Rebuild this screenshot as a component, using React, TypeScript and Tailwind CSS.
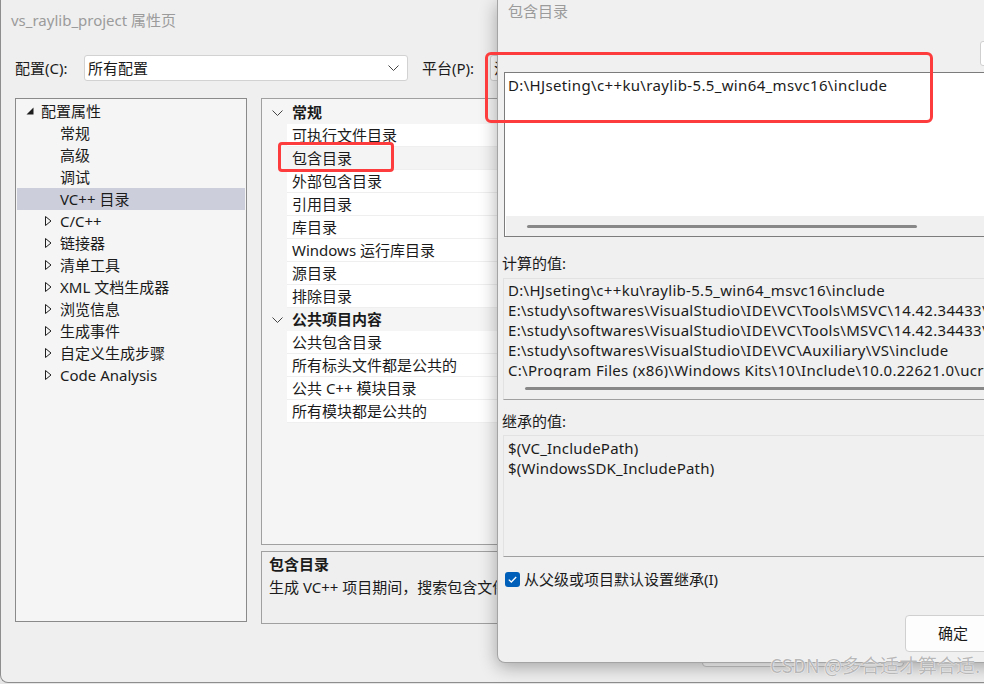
import React from "react";

const Chevron = ({ className = "" }: { className?: string }) => (
  <svg width="11" height="6" viewBox="0 0 11 6" className={className}>
    <path d="M0.5 0.5 L5.5 5.5 L10.5 0.5" fill="none" stroke="#444" strokeWidth="1" />
  </svg>
);

const Expanded = () => (
  <svg width="8" height="8" viewBox="0 0 8 8">
    <polygon points="7.5,0.5 7.5,7.5 0.5,7.5" fill="#1e1e1e" />
  </svg>
);

const Collapsed = () => (
  <svg width="7" height="10" viewBox="0 0 7 10">
    <polygon points="0.5,0.5 6,5 0.5,9.5" fill="none" stroke="#1e1e1e" strokeWidth="1" />
  </svg>
);

type TreeItem = { label: string; level: 0 | 1; kind: "open" | "closed" | "leaf"; selected?: boolean };

const tree: TreeItem[] = [
  { label: "配置属性", level: 0, kind: "open" },
  { label: "常规", level: 1, kind: "leaf" },
  { label: "高级", level: 1, kind: "leaf" },
  { label: "调试", level: 1, kind: "leaf" },
  { label: "VC++ 目录", level: 1, kind: "leaf", selected: true },
  { label: "C/C++", level: 1, kind: "closed" },
  { label: "链接器", level: 1, kind: "closed" },
  { label: "清单工具", level: 1, kind: "closed" },
  { label: "XML 文档生成器", level: 1, kind: "closed" },
  { label: "浏览信息", level: 1, kind: "closed" },
  { label: "生成事件", level: 1, kind: "closed" },
  { label: "自定义生成步骤", level: 1, kind: "closed" },
  { label: "Code Analysis", level: 1, kind: "closed" },
];

type GridRow = { label: string; header?: boolean; selected?: boolean };
const grid: GridRow[] = [
  { label: "常规", header: true },
  { label: "可执行文件目录" },
  { label: "包含目录", selected: true },
  { label: "外部包含目录" },
  { label: "引用目录" },
  { label: "库目录" },
  { label: "Windows 运行库目录" },
  { label: "源目录" },
  { label: "排除目录" },
  { label: "公共项目内容", header: true },
  { label: "公共包含目录" },
  { label: "所有标头文件都是公共的" },
  { label: "公共 C++ 模块目录" },
  { label: "所有模块都是公共的" },
];

const computed = [
  "D:\\HJseting\\c++ku\\raylib-5.5_win64_msvc16\\include",
  "E:\\study\\softwares\\VisualStudio\\IDE\\VC\\Tools\\MSVC\\14.42.34433\\include",
  "E:\\study\\softwares\\VisualStudio\\IDE\\VC\\Tools\\MSVC\\14.42.34433\\ATLMFC\\include",
  "E:\\study\\softwares\\VisualStudio\\IDE\\VC\\Auxiliary\\VS\\include",
  "C:\\Program Files (x86)\\Windows Kits\\10\\Include\\10.0.22621.0\\ucrt",
];

function MainWindow() {
  return (
    <div className="absolute left-0 top-0 w-[1010px] h-[683px] bg-[#efefef] border-l border-b border-[#8e8e8e] rounded-bl-[8px] flex flex-col">
      <div className="h-[40px] pl-[10px] flex items-center text-[15px] text-[#9b9b9b]">vs_raylib_project 属性页</div>
      <div className="mt-[15px] h-[26px] flex items-center pl-[14px] text-[15px] text-[#1b1b1b]">
        <span className="w-[69px]">配置(C):</span>
        <div className="w-[324px] h-[26px] bg-white border border-[#d2d2d2] rounded-[3px] flex items-center pl-[3px]">
          <span>所有配置</span>
          <Chevron className="ml-auto mr-[8px]" />
        </div>
        <span className="ml-[14px] w-[68px]">平台(P):</span>
        <div className="w-[200px] h-[26px] bg-white border border-[#d2d2d2] rounded-[3px] flex items-center pl-[3px]">
          <span>活动(x64)</span>
        </div>
      </div>
      <div className="mt-[17px] flex pl-[14px] text-[15px] text-[#1b1b1b]">
        <div className="w-[232px] h-[524px] border border-[#8a8a8a] bg-[#f5f5f5] pt-[1px]">
          {tree.map((t, i) => (
            <div
              key={i}
              className={`h-[22px] mx-[1px] flex items-center ${t.selected ? "bg-[#cccedb]" : ""} ${t.level === 0 ? "pl-[9px]" : "pl-[28px]"}`}
            >
              <span className="w-[15px] flex items-center">
                {t.kind === "open" && <Expanded />}
                {t.kind === "closed" && <Collapsed />}
              </span>
              <span className="whitespace-nowrap">{t.label}</span>
            </div>
          ))}
        </div>
        <div className="ml-[14px] w-[460px] flex flex-col">
          <div className="h-[447px] border border-[#a0a0a0] bg-[#f5f5f5] pt-[2px]">
            {grid.map((g, i) =>
              g.header ? (
                <div key={i} className="h-[23px] flex items-center">
                  <span className="w-[30px] flex justify-center pl-[1px]">
                    <Chevron />
                  </span>
                  <span className="font-bold whitespace-nowrap">{g.label}</span>
                </div>
              ) : (
                <div key={i} className="h-[23px] flex">
                  <span className="w-[25px]" />
                  <div
                    className={`flex-1 flex items-center pl-[5px] border-b border-[#efefef] whitespace-nowrap ${g.selected ? "bg-[#f4f4f4]" : "bg-white"}`}
                  >
                    {g.label}
                  </div>
                </div>
              )
            )}
          </div>
          <div className="mt-[6px] h-[73px] border border-[#a0a0a0] pl-[7px] pt-[1px] leading-[23px]">
            <div className="font-bold">包含目录</div>
            <div className="whitespace-nowrap">生成 VC++ 项目期间，搜索包含文件时使用的路径。</div>
          </div>
        </div>
      </div>
      <div className="mt-auto pb-[15px] flex pl-[701px] gap-[10px] text-[15px]">
        <div className="w-[96px] h-[37px] bg-white border border-[#c8c8c8] rounded-[4px] flex items-center justify-center">确定</div>
        <div className="w-[96px] h-[37px] bg-white border border-[#c8c8c8] rounded-[4px] flex items-center justify-center">取消</div>
      </div>
    </div>
  );
}

function Dialog() {
  return (
    <div className="absolute left-[497px] top-0 w-[520px] h-[663px] bg-[#f0f0f0] border-l border-b border-[#a4a4a4] rounded-bl-[8px] shadow-[0_4px_18px_rgba(0,0,0,0.32)] flex flex-col text-[15px] text-[#1b1b1b]">
      <div className="h-[22px] pl-[10px] flex items-center text-[#9b9b9b]">包含目录</div>
      <div className="mt-[19px] h-[25px] pl-[482px] flex">
        <div className="w-[30px] h-[25px] bg-white border border-[#cfcfcf] rounded-[3px]" />
      </div>
      <div className="mt-[6px] ml-[6px] h-[165px] bg-white border-t border-l border-b border-[#7c7c7c] flex flex-col">
        <div className="flex-1 pl-[3px] pt-[2px] leading-[20px] whitespace-nowrap tracking-[0.35px]">
          D:\HJseting\c++ku\raylib-5.5_win64_msvc16\include
        </div>
        <div className="h-[20px] mx-[1px] bg-[#f0f0f0] flex items-center">
          <div className="ml-[21px] w-[390px] h-[3px] rounded-full bg-[#888888]" />
        </div>
      </div>
      <div className="mt-[16px] ml-[4px] leading-[20px]">计算的值:</div>
      <div className="mt-[5px] ml-[5px] h-[122px] border-t border-l border-[#e2e2e2] border-b border-b-[#a0a0a0] flex flex-col overflow-hidden">
        <div className="flex-1 overflow-hidden pl-[4px] pt-[1px] leading-[20px] whitespace-nowrap tracking-[0.3px]">
          {computed.map((c, i) => (
            <div key={i}>{c}</div>
          ))}
        </div>
        <div className="h-[21px] flex items-center">
          <div className="ml-[21px] w-[600px] h-[3px] rounded-full bg-[#888888]" />
        </div>
      </div>
      <div className="mt-[11px] ml-[4px] leading-[20px]">继承的值:</div>
      <div className="mt-[4px] ml-[5px] h-[122px] border-t border-l border-[#e2e2e2] border-b border-b-[#a0a0a0] pl-[4px] pt-[2px] leading-[20px] whitespace-nowrap tracking-[0.2px]">
        <div>$(VC_IncludePath)</div>
        <div>$(WindowsSDK_IncludePath)</div>
      </div>
      <div className="mt-[12px] ml-[7px] h-[20px] flex items-center gap-[4px]">
        <div className="w-[15px] h-[15px] rounded-[3px] bg-[#005fb8] flex items-center justify-center">
          <svg width="9" height="7" viewBox="0 0 9 7">
            <path d="M0.8 3.6 L3.3 6 L8.2 1" fill="none" stroke="white" strokeWidth="1.3" />
          </svg>
        </div>
        <span>从父级或项目默认设置继承(I)</span>
      </div>
      <div className="mt-[26px] ml-[407px] w-[96px] h-[37px] bg-[#fdfdfd] border border-[#d0d0d0] rounded-[4px] flex items-center justify-center">
        确定
      </div>
    </div>
  );
}

export default function App() {
  return (
    <div className="relative w-[984px] h-[684px] overflow-hidden bg-[#e6e6e6] font-['Noto_Sans','Noto_Sans_CJK_SC',sans-serif]">
      <MainWindow />
      <Dialog />
      <div className="absolute left-[278px] top-[142px] w-[116px] h-[30px] border-[3px] border-[#fd3d3d] rounded-[4px]" />
      <div className="absolute left-[485px] top-[52px] w-[448px] h-[71px] border-[3px] border-[#fd3d3d] rounded-[6px]" />
      <div className="absolute left-[770px] top-[652px] text-[19px] leading-[26px] text-[#b8b8b8] whitespace-nowrap font-['Noto_Sans_CJK_SC',sans-serif] [text-shadow:0_0_1px_#ffffff,0_0_1px_#ffffff]">
        CSDN @多合适才算合适.
      </div>
    </div>
  );
}
